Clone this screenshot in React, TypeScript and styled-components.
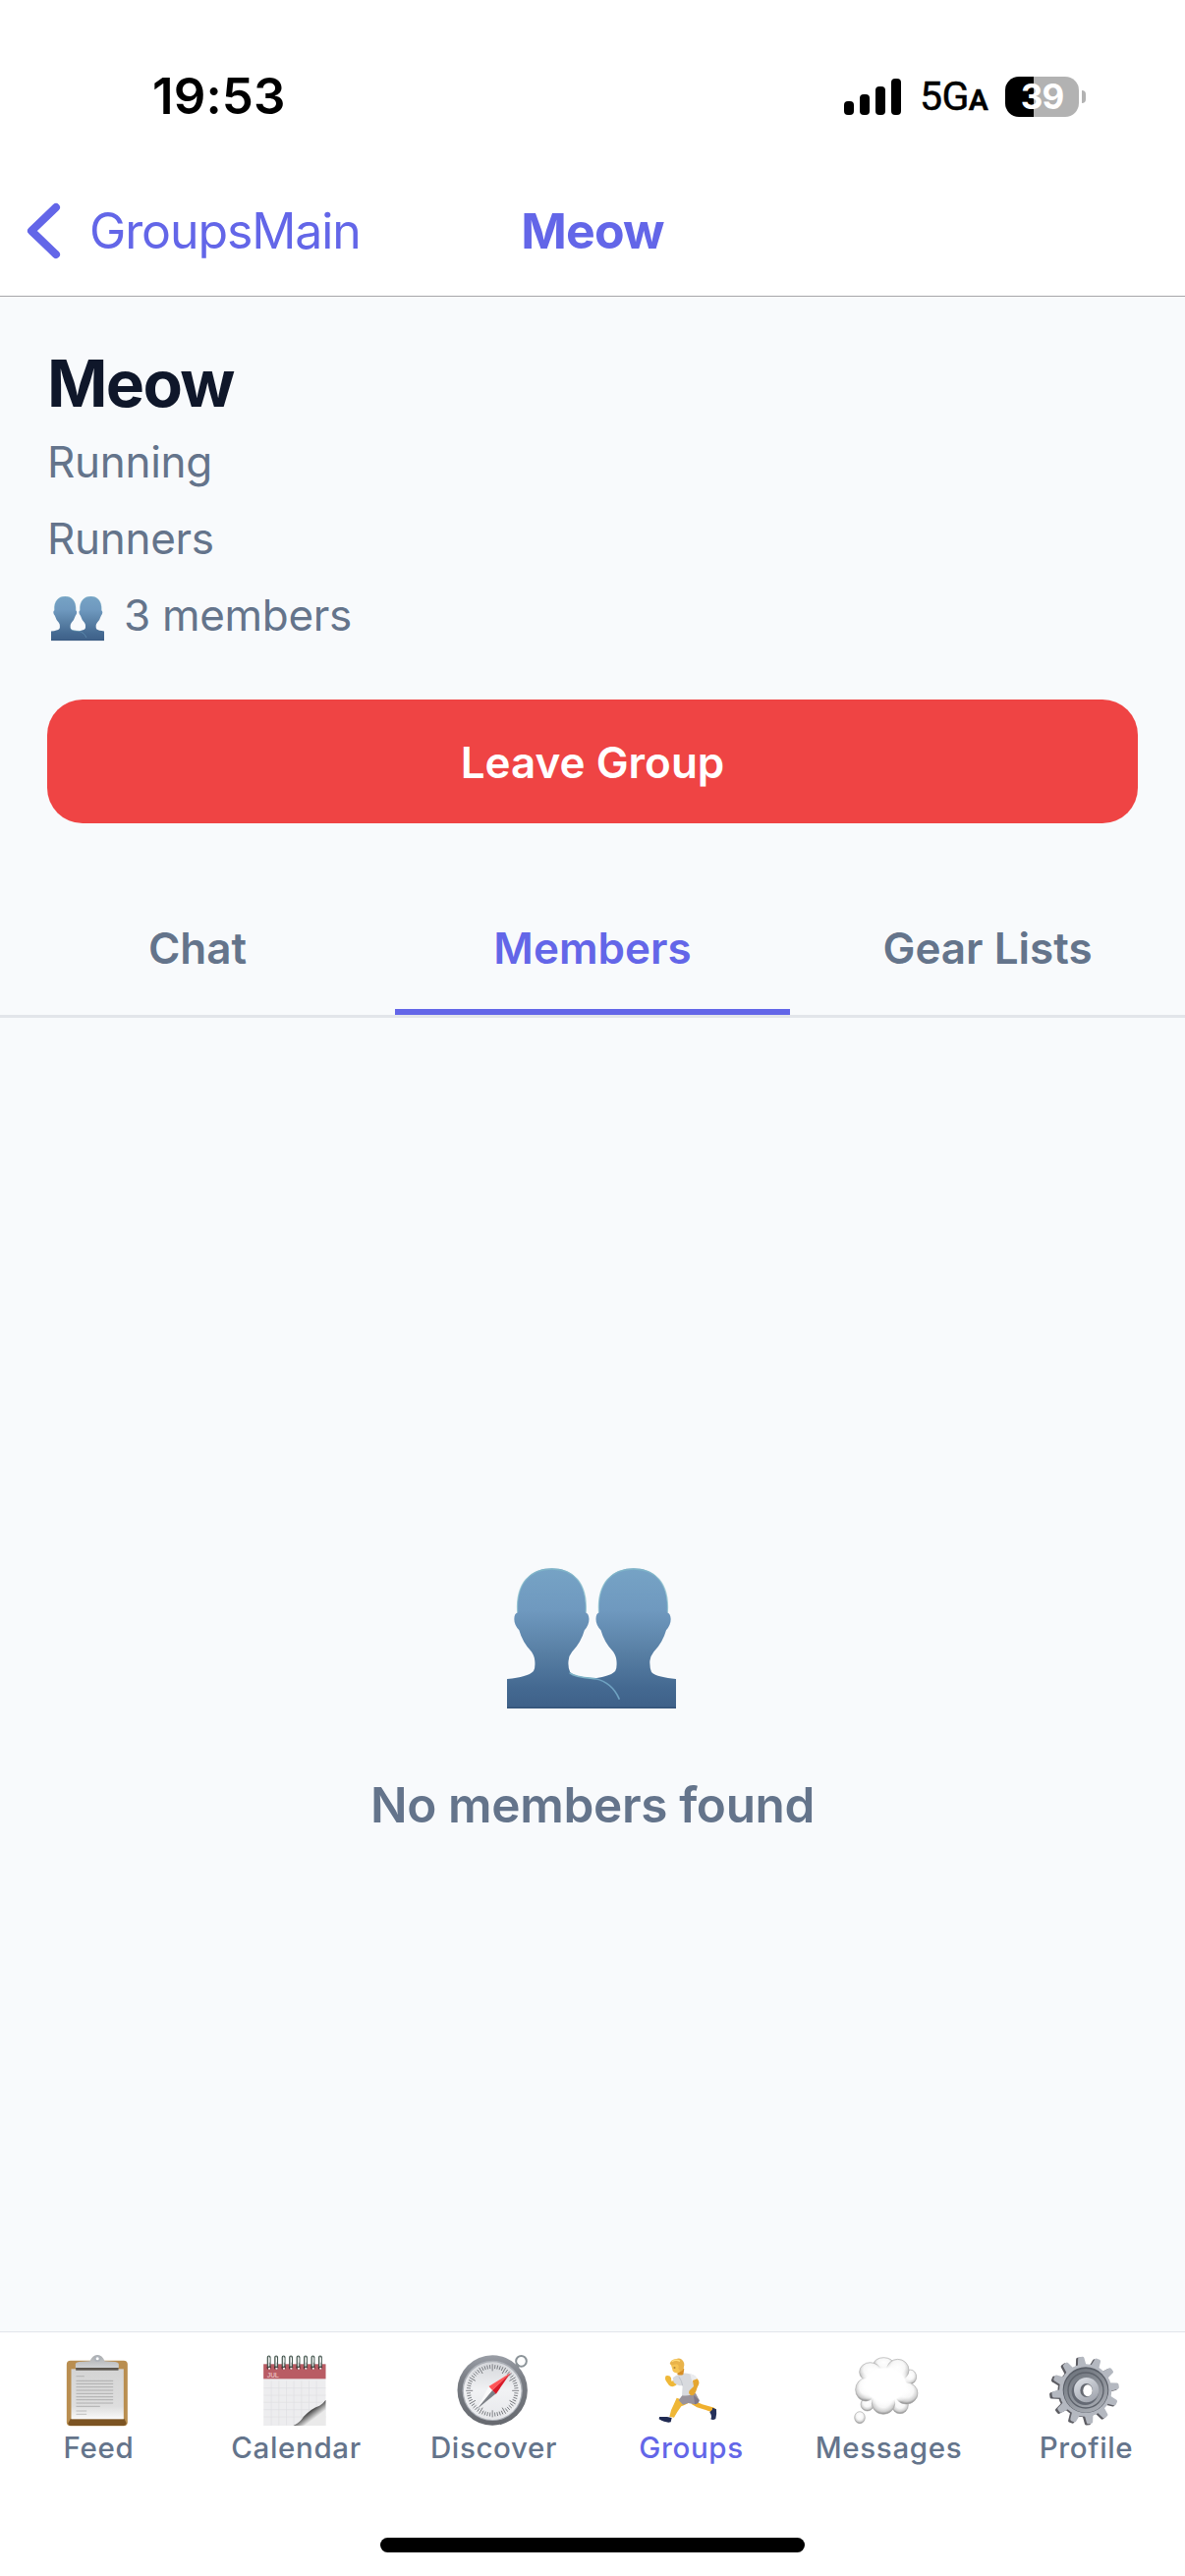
import React, { useId } from 'react';
import styled, { createGlobalStyle } from 'styled-components';

const color = {
  primary: '#6366e8',
  text: '#0f172a',
  muted: '#64748b',
  danger: '#ef4444',
  surface: '#f8fafc',
  border: '#e2e5ea',
};

const GlobalStyle = createGlobalStyle`
  * { box-sizing: border-box; }
  body {
    margin: 0;
    background: #fff;
    font-family: Inter, "Liberation Sans", sans-serif;
  }
  svg { display: block; flex: none; }
`;

const Screen = styled.div`
  display: flex;
  flex-direction: column;
  width: 1206px;
  height: 2622px;
  overflow: hidden;
  background: #fff;
`;

const StatusBar = styled.header`
  display: flex;
  align-items: center;
  height: 168px;
  padding: 68px 101px 40px 155px;
`;

const Clock = styled.div`
  flex: 1;
  font-size: 51px;
  font-weight: 600;
  line-height: 60px;
  letter-spacing: 0.1px;
`;

const Signal = styled.div`
  display: flex;
  align-items: flex-end;
  gap: 6px;
  height: 37px;
`;

const Bar = styled.i<{ $h: number }>`
  width: 10px;
  height: ${(p) => p.$h}px;
  border-radius: 4px;
  background: #000;
`;

const Network = styled.div`
  width: 70px;
  margin: 4px 17px 0 19px;
  font-family: Roboto, sans-serif;
  font-size: 41px;
  font-weight: 400;
  line-height: 60px;
  letter-spacing: -0.6px;
  white-space: nowrap;
  -webkit-text-stroke: 0.5px #000;
  span { font-size: 30px; font-weight: 600; }
`;

const Battery = styled.div`
  display: flex;
  align-items: center;
  gap: 3px;
`;

const BatteryBody = styled.div`
  width: 75px;
  height: 41px;
  border-radius: 14px;
  background: linear-gradient(90deg, #000 29px, #b2b2b2 29px);
  color: #fff;
  font-size: 35px;
  font-weight: 700;
  line-height: 41px;
  text-align: center;
  letter-spacing: -1px;
`;

const BatteryCap = styled.i`
  width: 4px;
  height: 13px;
  border-radius: 0 5px 5px 0;
  background: #b2b2b2;
`;

const NavBar = styled.nav`
  display: grid;
  grid-template-columns: 1fr auto 1fr;
  align-items: center;
  height: 134px;
  padding: 0 26px;
  border-bottom: 1px solid #a7a7aa;
  color: ${color.primary};
  font-size: 50px;
  line-height: 60px;
`;

const BackButton = styled.div`
  display: flex;
  align-items: center;
  gap: 29px;
  letter-spacing: -1.1px;
`;

const NavTitle = styled.div`
  font-weight: 700;
  letter-spacing: -0.8px;
`;

const GroupHeader = styled.section`
  display: flex;
  flex-direction: column;
  padding: 48px 48px;
  background: ${color.surface};
`;

const GroupName = styled.h1`
  margin: 0 0 13px;
  color: ${color.text};
  font-size: 66px;
  font-weight: 700;
  line-height: 80px;
  letter-spacing: -1.7px;
`;

const Detail = styled.p`
  display: flex;
  align-items: center;
  gap: 20px;
  margin: 0 0 24px;
  color: ${color.muted};
  font-size: 44px;
  line-height: 54px;
  letter-spacing: -0.3px;
  svg { margin: 8px 0 0 4px; }
`;

const LeaveButton = styled.button`
  height: 126px;
  margin: 35px 0 0;
  padding: 2px 0 0;
  border: 0;
  border-radius: 36px;
  background: ${color.danger};
  color: #fff;
  font: inherit;
  font-size: 44px;
  font-weight: 600;
`;

const Tabs = styled.div`
  display: grid;
  grid-template-columns: repeat(3, 1fr);
  background: ${color.surface};
  border-bottom: 3px solid ${color.border};
`;

const Tab = styled.div<{ $active?: boolean }>`
  padding: 52px 0 35px;
  border-bottom: 6px solid ${(p) => (p.$active ? color.primary : 'transparent')};
  color: ${(p) => (p.$active ? color.primary : color.muted)};
  font-size: 44px;
  font-weight: 600;
  line-height: 54px;
  text-align: center;
`;

const EmptyState = styled.main`
  display: flex;
  flex: 1;
  flex-direction: column;
  align-items: center;
  justify-content: center;
  gap: 68px;
  padding-top: 54px;
  background: ${color.surface};
  color: ${color.muted};
  font-size: 49.5px;
  font-weight: 600;
  line-height: 60px;
  letter-spacing: -0.35px;
  svg { margin-right: 2px; }
`;

const BottomBar = styled.footer`
  display: flex;
  flex-direction: column;
  align-items: center;
  justify-content: space-between;
  height: 249px;
  padding: 23px 0 24px;
  border-top: 1px solid #e2e5ea;
`;

const BottomTabs = styled.div`
  display: grid;
  grid-template-columns: repeat(6, 201px);
`;

const BottomTab = styled.div<{ $active?: boolean }>`
  display: flex;
  flex-direction: column;
  align-items: center;
  gap: 4px;
  color: ${(p) => (p.$active ? color.primary : color.muted)};
  font-size: 29.5px;
  font-weight: 500;
  line-height: 37px;
  letter-spacing: 0.65px;
  svg { margin-right: 4px; overflow: visible; }
`;

const HomeIndicator = styled.div`
  width: 432px;
  height: 15px;
  border-radius: 8px;
  background: #000;
`;

function People({ width }: { width: number }) {
  const id = useId();
  return (
    <svg width={width} height={(width * 431) / 517} viewBox="107 106 517 431">
      <defs>
        <linearGradient id={id} gradientUnits="userSpaceOnUse" x1="0" y1="106" x2="0" y2="537">
          <stop offset="0" stopColor="#76a3c5" />
          <stop offset="0.3" stopColor="#6f99bf" />
          <stop offset="0.6" stopColor="#587fa4" />
          <stop offset="0.85" stopColor="#446991" />
          <stop offset="1" stopColor="#3e6088" />
        </linearGradient>
      </defs>
      <g fill={`url(#${id})`}>
        <path d="M357 537V446C400 442 425 435 438 422Q444 412 442 390Q442 378 432 362Q405 335 394 296Q379 280 379 262Q379 246 388 242C383 150 430 107 494 107C558 107 603 150 598 242Q607 246 608 262Q608 280 594 296Q583 335 556 362Q545 376 544 390Q543 412 549 425C561 438 590 442 624 446V537Z" />
        <path d="M107 537V446C150 442 175 435 188 422Q194 412 192 390Q192 378 182 362Q155 335 144 296Q129 280 129 262Q129 246 139 242C134 150 180 107 244 107C308 107 353 150 348 242Q357 246 358 262Q358 280 344 296Q333 335 306 362Q295 376 295 390Q293 412 300 425C315 440 350 442 378 444C425 456 442 480 452 510V537Z" />
      </g>
      <g fill="none" strokeLinecap="round">
        <path d="M139 240C134 150 180 109 244 109C308 109 353 150 348 240M388 240C383 150 430 109 494 109C558 109 603 150 598 240" stroke="#85bccb" strokeWidth="4" opacity="0.7" />
        <path d="M300 428C315 440 350 442 378 445" stroke="#7eb3c6" strokeWidth="5" />
        <path d="M378 445C410 452 434 470 450 506" stroke="#6fa2c1" strokeWidth="5" />
      </g>
      <path d="M107 534H624" stroke="#36557a" strokeWidth="5" />
    </svg>
  );
}

function ClipboardIcon() {
  return (
    <svg width="72" height="72" viewBox="97.5 111 216 216">
      <defs>
        <linearGradient id="paper" x1="0" y1="0" x2="0" y2="1">
          <stop offset="0" stopColor="#d4d4d4" />
          <stop offset="0.75" stopColor="#dedede" />
          <stop offset="1" stopColor="#fafafa" />
        </linearGradient>
        <linearGradient id="clip" x1="0" y1="0" x2="0" y2="1">
          <stop offset="0" stopColor="#a9abad" />
          <stop offset="1" stopColor="#d0d2d4" />
        </linearGradient>
      </defs>
      <rect x="112" y="128" width="186" height="200" rx="12" fill="#b98e50" />
      <path d="M124 306H288L295 320Q292 327 286 327H124Q118 327 116 320Z" fill="#7c5423" />
      <rect x="126" y="154" width="160" height="153" fill="url(#paper)" />
      <rect x="140" y="148" width="130" height="10" fill="#5c5750" />
      <path d="M139 150V138Q140 133 150 132L183 130Q190 112 206 111Q222 112 228 130L260 132Q270 133 271 138V150Z" fill="url(#clip)" />
      <circle cx="206" cy="122" r="7" fill="#fff" stroke="#aeb3ba" strokeWidth="5" />
      <g stroke="#999" strokeWidth="2">
        <path d="M141 176H166M141 282H173M141 292H173" opacity="0.8" />
        {[190, 199, 209, 219, 229, 239, 248, 258, 268].map((y, i) => (
          <path key={y} d={`M141 ${y}H${i === 8 ? 214 : 254}`} />
        ))}
      </g>
    </svg>
  );
}

const JulText = styled.text`
  font: 600 20px "Liberation Sans", sans-serif;
  letter-spacing: -1px;
  fill: #e5b4b8;
`;

function CalendarIcon() {
  const rings = Array.from({ length: 8 }, (_, i) => 729.5 + i * 22.4);
  return (
    <svg width="72" height="72" viewBox="700.5 111 216 216">
      <defs>
        <linearGradient id="curl" gradientUnits="userSpaceOnUse" x1="838" y1="262" x2="880" y2="318">
          <stop offset="0.15" stopColor="#eee" />
          <stop offset="0.4" stopColor="#4c4c4c" />
          <stop offset="0.56" stopColor="#999" />
          <stop offset="0.75" stopColor="#eaeaea" />
        </linearGradient>
      </defs>
      <rect x="713" y="139" width="190" height="188" fill="#ededef" />
      <g stroke="#e0e0e2" strokeWidth="2">
        {[737, 760, 783, 806, 829, 852, 875].map((x) => <path key={x} d={`M${x} 190V326`} />)}
        {[212, 234, 256, 278, 300].map((y) => <path key={y} d={`M714 ${y}H903`} />)}
      </g>
      <path d="M804 327Q824 318 835 300Q858 274 884 266Q897 258 903 248V327Z" fill="url(#curl)" />
      <rect x="713" y="139" width="190" height="45" fill="#b95c64" />
      <JulText x="724" y="180">JUL</JulText>
      {rings.map((x) => (
        <g key={x}>
          <circle cx={x} cy="149" r="6.5" fill="#4b2228" />
          <circle cx={x + 1} cy="152" r="3.5" fill="#f4dfe0" />
          <rect x={x - 4} y="114" width="8" height="34" rx="4" fill="#dedede" stroke="#41544c" strokeWidth="3.5" />
          <path d={`M${x + 1} 120V134`} stroke="#fff" strokeWidth="3" />
        </g>
      ))}
    </svg>
  );
}

function CompassIcon() {
  const ticks = Array.from({ length: 60 }, (_, i) => i * 6);
  return (
    <svg width="72" height="72" viewBox="133.5 111 216 216">
      <defs>
        <linearGradient id="rim" x1="0" y1="0" x2="0" y2="1">
          <stop offset="0" stopColor="#9a9ea6" />
          <stop offset="0.35" stopColor="#797d84" />
          <stop offset="1" stopColor="#66696f" />
        </linearGradient>
        <linearGradient id="dial" x1="0" y1="0" x2="0" y2="1">
          <stop offset="0" stopColor="#d5d7db" />
          <stop offset="0.5" stopColor="#f1f2f4" />
          <stop offset="1" stopColor="#e7e8eb" />
        </linearGradient>
      </defs>
      <path d="M306 156L322 140" stroke="#747b80" strokeWidth="13" />
      <circle cx="330" cy="130" r="16" fill="none" stroke="#8c9499" strokeWidth="6" />
      <circle cx="242" cy="219" r="107" fill="url(#rim)" />
      <circle cx="242" cy="220" r="92" fill="#abafb6" />
      <circle cx="242" cy="221" r="88" fill="url(#dial)" />
      {ticks.map((a) => (
        <path key={a} d={a % 30 ? 'M242 141V153' : 'M242 139V160'} stroke="#63666b" strokeWidth="2.3" transform={`rotate(${a} 242 220)`} />
      ))}
      <path d="M194 277L231 207L242 219Z" fill="#fafafa" />
      <path d="M194 277L242 219L253 229Z" fill="#7c8086" />
      <path d="M298 165L231 207L242 219Z" fill="#ff5557" />
      <path d="M298 165L242 219L253 230Z" fill="#d81927" />
    </svg>
  );
}

function RunnerIcon() {
  return (
    <svg width="72" height="72" viewBox="738 111 216 216">
      <g strokeLinejoin="round">
        <path d="M806 242L846 256Q832 264 820 268Q808 284 798 302L784 299Q788 277 798 260Z" fill="#efb737" />
        <path d="M862 252L884 262L916 271Q926 274 927 282L913 286Q892 278 868 271L850 260Z" fill="#f0b02e" />
        <path d="M915 272L927 277Q929 292 925 306Q917 312 910 307Q915 298 907 286Q910 281 915 278Z" fill="#25305a" />
        <path d="M753 300Q765 300 777 300L791 303L788 316Q774 320 752 307Z" fill="#202a52" />
        <path d="M824 233L864 228L875 249Q873 260 862 262L841 258L825 263L812 249Z" fill="#99939b" />
        <path d="M858 234L875 249Q873 260 861 262Z" fill="#7f7888" />
        <path d="M801 188L809 199Q798 213 783 204L775 193Q768 184 773 175Q785 172 789 181L790 191Z" fill="#efb838" />
        <path d="M794 181Q815 164 838 167Q861 170 866 180L861 225Q849 238 822 235L824 205Q809 206 797 195Z" fill="#d8dade" />
        <path d="M824 205Q822 190 813 178" fill="none" stroke="#bec2c9" strokeWidth="3" />
        <path d="M847 169Q865 173 870 187L853 193Z" fill="#ebecef" />
        <path d="M855 189L869 184Q877 193 873 202Q868 211 865 222Q860 237 849 234Q840 229 845 220L858 207Z" fill="#e5a62f" />
        <path d="M812 147L829 154L826 171Q816 175 808 170Z" fill="#d68d25" />
        <path d="M788 139L794 132L818 136L821 155Q815 168 804 166Q793 163 793 155Z" fill="#f6c454" />
        <path d="M785 138Q788 124 805 123Q813 119 822 125Q832 135 828 147Q827 160 818 161L811 153Q815 142 806 139L796 141Q790 143 785 138Z" fill="#e9b34a" />
        <path d="M791 131Q804 123 816 130" fill="none" stroke="#ffdc7b" strokeWidth="4" />
        <path d="M797 150H802" stroke="#79541f" strokeWidth="3" />
      </g>
    </svg>
  );
}

function ThoughtIcon() {
  const puffs = [
    [379, 178, 19, 22], [248, 262, 20, 20], [348, 264, 25, 26], [298, 138, 30, 19],
    [257, 163, 33, 29], [341, 157, 34, 33], [243, 217, 31, 35], [367, 228, 35, 33], [297, 259, 35, 33],
  ];
  return (
    <svg width="72" height="72" viewBox="201 111 216 216">
      <defs>
        <radialGradient id="puff" cx="0.5" cy="0.38" r="0.62">
          <stop offset="0" stopColor="#fff" />
          <stop offset="0.5" stopColor="#f7f7f7" />
          <stop offset="0.8" stopColor="#cfcfcf" />
          <stop offset="1" stopColor="#868686" />
        </radialGradient>
        <radialGradient id="core">
          <stop offset="0.75" stopColor="#fff" />
          <stop offset="1" stopColor="#fff" stopOpacity="0" />
        </radialGradient>
      </defs>
      {puffs.map(([cx, cy, rx, ry]) => (
        <ellipse key={`${cx}-${cy}`} cx={cx} cy={cy} rx={rx} ry={ry} fill="url(#puff)" stroke="#a5a5a5" strokeWidth="1.8" />
      ))}
      <ellipse cx="303" cy="202" rx="82" ry="66" fill="url(#core)" />
      <ellipse cx="225" cy="302" rx="16" ry="18" fill="url(#puff)" stroke="#a5a5a5" strokeWidth="1.8" />
    </svg>
  );
}

function GearIcon() {
  const teeth = Array.from({ length: 12 }, (_, i) => -8 + i * 30);
  const tooth = 'M-14 -72L-9 -101Q-8 -105 -4 -105H5Q9 -105 10 -101L14 -72Z';
  return (
    <svg width="72" height="72" viewBox="804 111 216 216">
      <defs>
        <linearGradient id="well" x1="0" y1="0" x2="0.5" y2="1">
          <stop offset="0" stopColor="#686e77" />
          <stop offset="1" stopColor="#a4a8af" />
        </linearGradient>
        <linearGradient id="hub" x1="0" y1="0" x2="0.6" y2="1">
          <stop offset="0" stopColor="#e0e4ea" />
          <stop offset="1" stopColor="#a3a7b0" />
        </linearGradient>
      </defs>
      <g transform="translate(908 222)" fill="#5d5d63">
        <circle r="79" />
        {teeth.map((a) => <path key={a} d={tooth} transform={`rotate(${a}) scale(0.99)`} />)}
      </g>
      <g transform="translate(914 219)" fill="#b4b8c0">
        <circle r="80" />
        {teeth.map((a) => <path key={a} d={tooth} transform={`rotate(${a}) scale(0.98)`} />)}
      </g>
      <circle cx="915" cy="218" r="70" fill="#595e67" />
      <circle cx="915" cy="220" r="67" fill="url(#well)" />
      <circle cx="915" cy="219" r="54" fill="none" stroke="#5d626b" strokeWidth="4" />
      <circle cx="913" cy="223" r="41" fill="#646973" />
      <circle cx="917" cy="218" r="38" fill="url(#hub)" />
      <ellipse cx="917" cy="219" rx="19" ry="21" fill="#666a72" />
      <ellipse cx="921" cy="220" rx="14" ry="18" fill="#fff" />
    </svg>
  );
}

const bottomTabs = [
  { label: 'Feed', Icon: ClipboardIcon },
  { label: 'Calendar', Icon: CalendarIcon },
  { label: 'Discover', Icon: CompassIcon },
  { label: 'Groups', Icon: RunnerIcon, active: true },
  { label: 'Messages', Icon: ThoughtIcon },
  { label: 'Profile', Icon: GearIcon },
];

export default function App() {
  return (
    <Screen>
      <GlobalStyle />
      <StatusBar>
        <Clock>19:53</Clock>
        <Signal>
          {[14, 21, 29, 37].map((h) => <Bar key={h} $h={h} />)}
        </Signal>
        <Network>5G<span>A</span></Network>
        <Battery>
          <BatteryBody>39</BatteryBody>
          <BatteryCap />
        </Battery>
      </StatusBar>
      <NavBar>
        <BackButton>
          <svg width="36" height="58" viewBox="0 0 36 58" fill="none" stroke="currentColor" strokeWidth="8" strokeLinecap="round" strokeLinejoin="round">
            <path d="M31 5L6 29L31 53" />
          </svg>
          GroupsMain
        </BackButton>
        <NavTitle>Meow</NavTitle>
      </NavBar>
      <GroupHeader>
        <GroupName>Meow</GroupName>
        <Detail>Running</Detail>
        <Detail>Runners</Detail>
        <Detail><People width={54} />3 members</Detail>
        <LeaveButton>Leave Group</LeaveButton>
      </GroupHeader>
      <Tabs>
        <Tab>Chat</Tab>
        <Tab $active>Members</Tab>
        <Tab>Gear Lists</Tab>
      </Tabs>
      <EmptyState>
        <People width={172} />
        No members found
      </EmptyState>
      <BottomBar>
        <BottomTabs>
          {bottomTabs.map(({ label, Icon, active }) => (
            <BottomTab key={label} $active={active}>
              <Icon />
              {label}
            </BottomTab>
          ))}
        </BottomTabs>
        <HomeIndicator />
      </BottomBar>
    </Screen>
  );
}
